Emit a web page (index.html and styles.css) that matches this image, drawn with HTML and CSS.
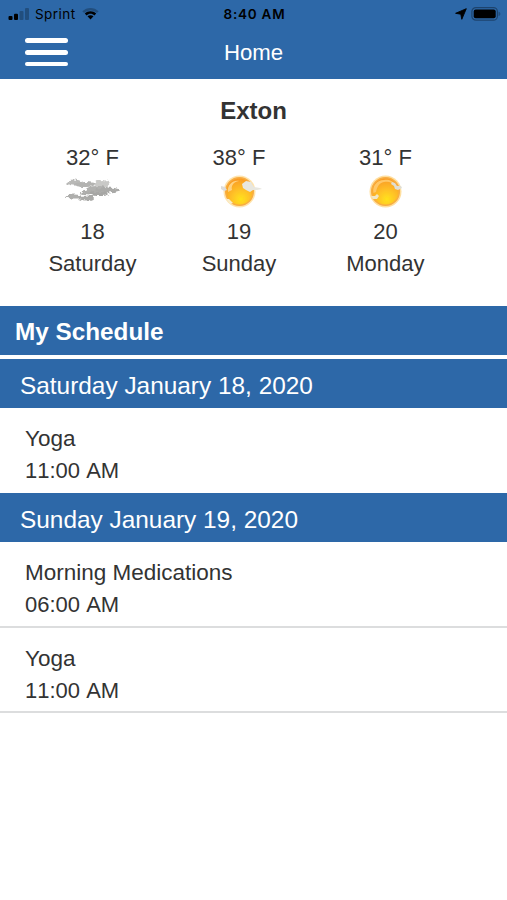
FILE: index.html
```html
<!DOCTYPE html>
<html lang="en">
<head>
<meta charset="utf-8">
<title>Home</title>
<link rel="stylesheet" href="styles.css">
</head>
<body>
<header class="top">
  <div class="status">
    <div class="carrier">
      <svg class="signal" width="22" height="13" viewBox="0 0 22 13"><rect x="0.5" y="8" width="4" height="4" rx="1"/><rect x="6" y="5.7" width="4" height="6.3" rx="1"/><rect class="dim" x="11.5" y="3" width="4" height="9" rx="1"/><rect class="dim" x="17" y="0" width="4" height="12" rx="1"/></svg>
      <span class="name">Sprint</span>
      <svg width="17" height="14" viewBox="0 0 17 14"><path class="dim" d="M.3 4.3C4.8-.2 12.2-.2 16.7 4.3L14.9 6.1C11.3 2.6 5.7 2.6 2.1 6.1Z"/><path d="M2.8 6.6C6 3.5 11 3.5 14.2 6.6L12.4 8.4C10.1 6.3 6.9 6.3 4.6 8.4Z"/><path d="M5.5 9.3C7.2 7.9 9.8 7.9 11.5 9.3L8.5 12.6Z"/></svg>
    </div>
    <div class="clock">8:40 AM</div>
    <div class="power">
      <svg width="12" height="12" viewBox="0 0 12 12"><path d="M11.3.7 6.8 11.3 5.8 6.2.6 5.3Z" stroke="#000" stroke-width=".9" stroke-linejoin="round"/></svg>
      <svg width="30" height="14" viewBox="0 0 30 14"><rect class="shell" x=".9" y=".6" width="25.5" height="12.6" rx="4"/><rect x="2.7" y="2.5" width="22" height="8.8" rx="2"/><path class="dim" d="M27.5 4.7C30 5.2 30 8.6 27.5 9.1Z"/></svg>
    </div>
  </div>
  <div class="nav">
    <div class="menu"><i></i><i></i><i></i></div>
    <h1>Home</h1>
  </div>
</header>

<section class="weather">
  <h2>Exton</h2>
  <div class="days">
    <div class="day">
      <span>32° F</span>
      <svg class="icon" width="60" height="40" viewBox="0 0 60 40">
        <defs>
          <radialGradient id="sun" cx=".55" cy=".78" r=".75"><stop stop-color="#ffe21c"/><stop offset=".45" stop-color="#ffc127"/><stop offset="1" stop-color="#f99a24"/></radialGradient>
          <filter id="soft" x="-20%" y="-20%" width="140%" height="140%"><feGaussianBlur stdDeviation=".7"/></filter>
          <filter id="wisp" x="-20%" y="-20%" width="140%" height="140%"><feTurbulence type="fractalNoise" baseFrequency=".22" numOctaves="3" seed="4" result="n"/><feDisplacementMap in="SourceGraphic" in2="n" scale="5" xChannelSelector="R" yChannelSelector="G"/><feGaussianBlur stdDeviation=".5"/></filter>
        </defs>
        <g filter="url(#wisp)">
          <ellipse cx="12" cy="11.500" rx="8" ry="3" fill="#b9b9b7"/>
          <ellipse cx="23" cy="13.500" rx="11" ry="2.500" fill="#b3b3b1"/>
          <ellipse cx="40" cy="12.500" rx="7.500" ry="3.500" fill="#c9c9c7"/>
          <ellipse cx="36" cy="18.500" rx="12" ry="3.500" fill="#b0b0ae"/>
          <ellipse cx="45" cy="19" rx="12" ry="2.500" fill="#aaaaa8"/>
          <ellipse cx="31" cy="21.500" rx="13" ry="2" fill="#adadab"/>
          <ellipse cx="37" cy="23" rx="9" ry="2" fill="#a6a6a4"/>
          <ellipse cx="12" cy="25.500" rx="9" ry="2" fill="#aeaeac"/>
          <ellipse cx="24" cy="27" rx="8" ry="2.500" fill="#aaaaa8"/>
        </g>
      </svg>
      <span class="date">18</span>
      <span>Saturday</span>
    </div>
    <div class="day">
      <span>38° F</span>
      <svg class="icon" width="60" height="40" viewBox="0 0 60 40">
        <g filter="url(#soft)">
          <circle cx="30.5" cy="20.5" r="16" fill="#ffe4ad"/>
          <circle cx="30.5" cy="20.5" r="13.8" fill="url(#sun)" stroke="#f8ad43" stroke-width="1.5"/>
          <path d="M19 21C18 14 24 9 30 10c-6 1-8 5-7 9Z" fill="#ffd27f"/>
          <path d="m33 13 4-3 5 1 3 5 6 1 2 1-5 1-4 0-3 2-4-2-3-2Z" fill="#e8e7df"/>
          <path d="m12 15 4 1 2 3-3 1-3-2Z" fill="#deddda"/>
          <path d="m17 28 3 0 4 4-3 1Z" fill="#f8eccb"/>
        </g>
      </svg>
      <span class="date">19</span>
      <span>Sunday</span>
    </div>
    <div class="day">
      <span>31° F</span>
      <svg class="icon" width="60" height="40" viewBox="0 0 60 40">
        <g filter="url(#soft)">
          <circle cx="30.5" cy="20.5" r="16" fill="#ffdf9f"/>
          <circle cx="30.5" cy="20.5" r="13.8" fill="url(#sun)" stroke="#f8ad43" stroke-width="1.5"/>
          <path d="M18.5 22C17 15 22 9 29 9c6-1 10 2 12 6-4-4-8-5-12-4-5 1-7 5-8 10Z" fill="#ffc766"/>
          <path d="m37 11 3 1 2 3 4 0 1 2-4 2-3-1-1-3-3-2Z" fill="#e0ded3"/>
          <path d="m16 25 4 0 2-2 2 2-2 3-4 0Z" fill="#f2e6c4"/>
        </g>
      </svg>
      <span class="date">20</span>
      <span>Monday</span>
    </div>
  </div>
</section>

<main>
  <h2 class="title">My Schedule</h2>
  <h3>Saturday January 18, 2020</h3>
  <div class="event last">Yoga<br><time>11:00 AM</time></div>
  <h3>Sunday January 19, 2020</h3>
  <div class="event tall">Morning Medications<br><time>06:00 AM</time></div>
  <div class="event">Yoga<br><time>11:00 AM</time></div>
</main>
</body>
</html>
```
FILE: styles.css
```css
* { box-sizing: border-box; }
body {
  margin: 0;
  background: #fff;
  color: #333;
  font: 22px/32px "Liberation Sans", Arial, sans-serif;
}
h1, h2, h3 { margin: 0; font-weight: 400; }
svg { display: block; }
.dim { opacity: .25; }
.top { height: 79px; background: #2d68a8; }
.status {
  height: 28px;
  padding: 0 6px 0 8px;
  display: grid;
  grid-template-columns: 1fr auto 1fr;
  align-items: center;
  color: #000;
  font: 13.5px/28px Inter, sans-serif;
}
.carrier, .power { display: flex; align-items: center; }
.name { margin: 0 6px 0 5px; letter-spacing: .45px; }
.clock { font-weight: 600; font-size: 13.5px; letter-spacing: .75px; }
.power { justify-content: flex-end; gap: 4px; }
.power svg { margin-top: -1px; }
.shell { fill: none; stroke: #000; stroke-opacity: .35; stroke-width: 1.2; }
.nav {
  height: 51px;
  padding: 0 25px;
  display: grid;
  grid-template-columns: 43px 1fr 43px;
  color: #fff;
}
.menu { display: flex; flex-direction: column; gap: 7px; padding-top: 10px; }
.menu i { height: 4.8px; border-radius: 3px; background: #fff; }
h1 { font-size: 22.2px; line-height: 50px; text-align: center; }
.weather { height: 227px; padding-top: 16px; }
.weather h2 { font-size: 24px; font-weight: 700; text-align: center; }
.days {
  display: grid;
  grid-template-columns: repeat(3, 146.5px);
  padding: 15px 0 0 19.2px;
}
.day { display: flex; flex-direction: column; align-items: center; }
.icon { margin: -3px 0 4.5px; }
.date { margin-bottom: .5px; }
.title {
  height: 49px;
  margin-bottom: 4px;
  padding-left: 15px;
  background: #2d68a8;
  color: #fff;
  font-size: 24.3px;
  font-weight: 700;
  line-height: 51px;
}
h3 {
  height: 49px;
  padding-left: 20px;
  background: #2d68a8;
  color: #fff;
  font-size: 24.4px;
  line-height: 54px;
}
.event {
  height: 85px;
  padding: 15px 25px 0;
  font-size: 22.5px;
  border-bottom: 2px solid #dcddde;
}
.tall { height: 86px; }
.event time { font-size: 22px; font-kerning: none; }
.last { border-bottom: 0; }
```
